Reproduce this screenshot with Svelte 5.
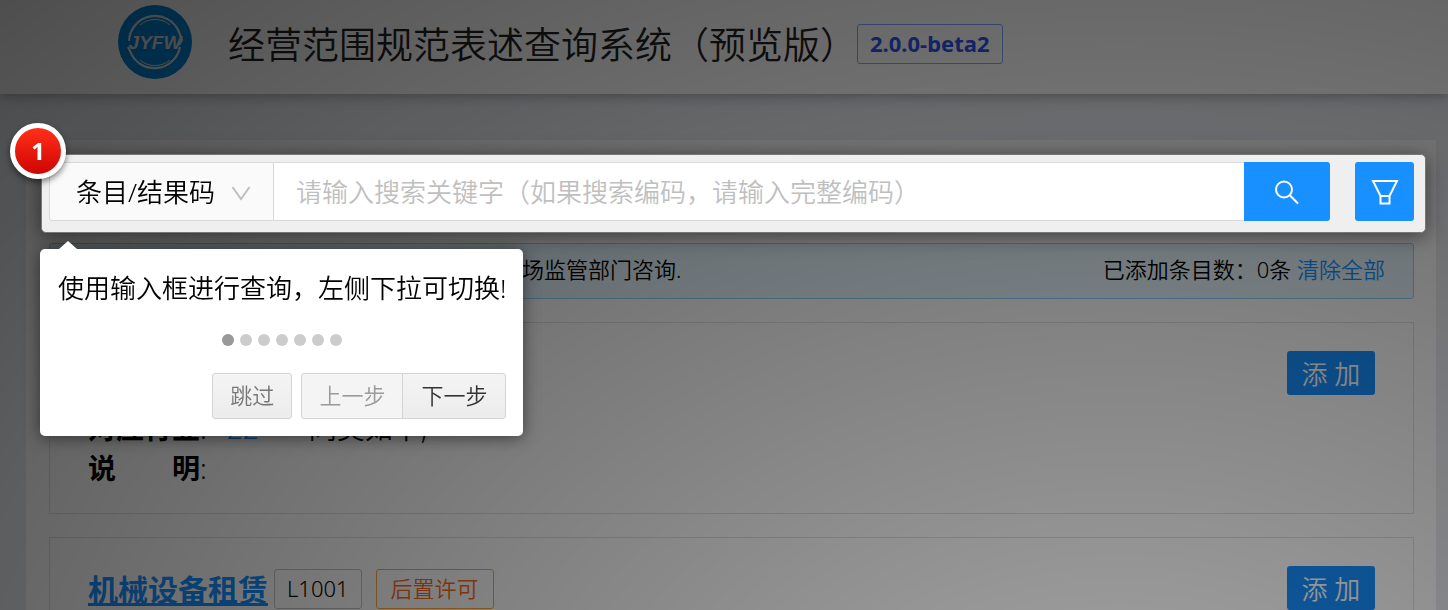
<script>
	let query = ''
	let field = 'code'
	let step = 0

	const stepCount = 7

	const items = [
		{
			name: '机械租赁',
			code: 'L1000',
			details: [
				{ label: '对应行业', link: '22', value: '同类如下,' },
				{ label: '说　　明', link: '', value: '' }
			]
		},
		{
			name: '机械设备租赁',
			code: 'L1001',
			permit: '后置许可',
			details: []
		}
	]
</script>

<header>
	<svg class="logo" viewBox="0 0 74 74" aria-hidden="true">
		<circle cx="37" cy="37" r="37" fill="#0084d6" />
		<g fill="none" stroke="#ddd">
			<path d="M11 36A26 26 0 0 1 61 27L64 35L61 40" stroke-width="2.2" />
			<path d="M62 42A26 26 0 0 1 12 46L10 42" stroke-width="2.2" />
			<path d="M22 20A23 23 0 0 1 52 20M22 55A23 23 0 0 0 52 55" stroke-width="1" />
		</g>
		<text x="37" y="44" text-anchor="middle">JYFW</text>
	</svg>
	<h1>经营范围规范表述查询系统（预览版）</h1>
	<span class="version">2.0.0-beta2</span>
</header>

<main>
	<form class="search" on:submit|preventDefault>
		<div class="field">
			<select bind:value={field} aria-label="查询方式">
				<option value="code">条目/结果码</option>
			</select>
			<svg viewBox="0 0 20 16" aria-hidden="true"><path d="M1.500 2L10 14L18.500 2" /></svg>
		</div>
		<input type="text" bind:value={query} aria-label="关键字" placeholder="请输入搜索关键字（如果搜索编码，请输入完整编码）" />
		<button class="go" aria-label="搜索">
			<svg viewBox="0 0 28 26" aria-hidden="true">
				<circle cx="11" cy="10.500" r="8" />
				<path d="M17 16.500L25 24.500" />
			</svg>
		</button>
		<button class="filter" type="button" aria-label="筛选">
			<svg viewBox="0 0 28 26" aria-hidden="true">
				<path d="M2 2H26L18.500 17H9.500ZM9.500 17V24.500H18.500V17" />
			</svg>
		</button>

		<span class="badge">1</span>
		<div class="tooltip" role="dialog" aria-label="使用引导">
			<p>使用输入框进行查询，左侧下拉可切换!</p>
			<div class="dots">
				{#each Array(stepCount) as _, i}
					<button type="button" class="dot" class:active={i == step} aria-label="第{i + 1}步" on:click={() => (step = i)}></button>
				{/each}
			</div>
			<div class="steps">
				<button type="button" class="skip">跳过</button>
				<button type="button" class="prev" disabled={step == 0} on:click={() => step--}>上一步</button>
				<button type="button" class="next" disabled={step == stepCount - 1} on:click={() => step++}>下一步</button>
			</div>
		</div>
	</form>

	<div class="notice">
		<span>如对经营范围规范表述有疑问，请向所在地市场监管部门咨询.</span>
		<span>已添加条目数：0条 <a href="#clear">清除全部</a></span>
	</div>

	{#each items as item}
		<article>
			<div class="info">
				<h2>
					<a href="#{item.code}">{item.name}</a>
					<span class="tag">{item.code}</span>
					{#if item.permit}
						<span class="tag permit">{item.permit}</span>
					{/if}
				</h2>
				{#each item.details as row}
					<p><b>{row.label}</b>:{#if row.link}<a href="#{row.link}">{row.link}</a>{/if}<span>{row.value}</span></p>
				{/each}
			</div>
			<button class="add">添 加</button>
		</article>
	{/each}
</main>

<div class="overlay"></div>

<style>
	:global(body) {
		margin: 0;
		overflow: hidden;
		background: #e9ecf1;
		color: #000;
		font-family: "Noto Sans", "Noto Sans CJK SC", sans-serif;
		font-weight: 350;
	}

	header {
		display: flex;
		align-items: center;
		height: 94px;
		box-sizing: border-box;
		padding: 0 118px 10px;
		background: #fff;
		box-shadow: 0 2px 12px rgba(0, 0, 0, 0.3);
		position: relative;
	}

	.logo {
		width: 74px;
		height: 74px;
		margin-right: 36px;
		flex: none;
	}

	.logo text {
		font: italic bold 19px "Liberation Sans", sans-serif;
		fill: #ddd;
	}

	h1 {
		margin: 0;
		padding-top: 6px;
		color: #222;
		font-size: 37px;
		font-weight: 350;
		line-height: 56px;
		white-space: nowrap;
	}

	.version {
		margin-top: 4px;
		padding: 0 12px 2px;
		border: 1px solid #85a5ff;
		border-radius: 3px;
		color: #2f54eb;
		font-size: 22px;
		font-weight: bold;
		line-height: 36px;
	}

	main {
		margin: 46px 12px 0 26px;
		padding: 22px 22px 22px 23px;
		background: #fff;
	}

	button, input, select {
		font-family: inherit;
		font-weight: inherit;
		margin: 0;
	}

	button {
		cursor: pointer;
	}

	a {
		color: #1890ff;
	}

	.search {
		display: flex;
		height: 59px;
		position: relative;
		z-index: 2;
	}

	.search::before {
		content: "";
		position: absolute;
		z-index: -1;
		inset: -8px -12px -12px -8px;
		border: 1px solid #777;
		box-sizing: border-box;
		border-radius: 5px;
		background: #efefef;
		box-shadow: 0 3px 20px rgba(0, 0, 0, 0.5);
	}

	.field {
		position: relative;
		width: 225px;
		box-sizing: border-box;
		flex: none;
		border: 1px solid #d9d9d9;
		border-radius: 3px 0 0 3px;
		background: #fafafa;
	}

	.field select {
		width: 100%;
		height: 100%;
		padding: 0 26px;
		border: 0;
		background: none;
		color: #000;
		appearance: none;
		font-size: 26px;
	}

	.field svg {
		position: absolute;
		right: 22px;
		top: 22px;
		width: 20px;
		height: 16px;
		fill: none;
		stroke: #bfbfbf;
		stroke-width: 2;
		pointer-events: none;
	}

	.search input {
		flex: 1;
		min-width: 0;
		box-sizing: border-box;
		padding: 0 22px;
		border: 1px solid #d9d9d9;
		border-width: 1px 0;
		background: #fff;
		font-size: 26px;
	}

	.search input::placeholder {
		color: #bfbfbf;
	}

	.go, .filter {
		display: flex;
		align-items: center;
		justify-content: center;
		flex: none;
		padding: 0;
		border: 0;
		background: #1890ff;
	}

	.go {
		width: 86px;
		border-radius: 0 3px 3px 0;
	}

	.filter {
		width: 59px;
		margin-left: 25px;
		border-radius: 3px;
	}

	.go svg, .filter svg {
		width: 28px;
		height: 26px;
		fill: none;
		stroke: #fff;
		stroke-width: 2;
	}

	.badge {
		position: absolute;
		left: -39px;
		top: -39px;
		width: 46px;
		height: 46px;
		border: 5px solid #fff;
		border-radius: 50%;
		background: linear-gradient(#ff3019, #cf0404);
		box-shadow: 0 3px 6px rgba(0, 0, 0, 0.5);
		color: #fff;
		font: bold 24px/46px "Noto Sans", sans-serif;
		text-align: center;
	}

	.tooltip {
		position: absolute;
		left: -9px;
		top: 87px;
		padding: 18px 17px 17px 18px;
		border-radius: 5px;
		background: #fff;
		box-shadow: 0 2px 16px rgba(0, 0, 0, 0.5);
	}

	.tooltip::before {
		content: "";
		position: absolute;
		left: 19px;
		top: -8px;
		border: 9px solid transparent;
		border-top: 0;
		border-bottom: 8px solid #fff;
	}

	.tooltip p {
		margin: 0;
		font-size: 26px;
		line-height: 42px;
		white-space: nowrap;
	}

	.dots {
		display: flex;
		justify-content: center;
		gap: 6px;
		margin: 25px 0 27px;
	}

	.dot {
		width: 12px;
		height: 12px;
		padding: 0;
		border: 0;
		border-radius: 50%;
		background: #ccc;
	}

	.dot.active {
		background: #999;
	}

	.steps {
		display: flex;
		justify-content: flex-end;
	}

	.steps button {
		height: 46px;
		padding: 0 17px 4px;
		border: 1px solid #d4d4d4;
		background: linear-gradient(#f4f4f4, #ececec);
		color: #333;
		font-size: 22px;
	}

	.steps .skip {
		margin-right: 9px;
		border-radius: 3px;
		color: #777;
	}

	.steps .prev {
		border-radius: 3px 0 0 3px;
	}

	.steps .prev:disabled {
		background: #f4f4f4;
		color: #9a9a9a;
	}

	.steps .next {
		margin-left: -1px;
		padding: 0 18px 4px;
		border-radius: 0 3px 3px 0;
	}

	.notice {
		display: flex;
		justify-content: space-between;
		margin-top: 22px;
		padding: 0 28px 3px 32px;
		border: 1px solid #91d5ff;
		border-radius: 3px;
		background: #e6f7ff;
		font-size: 22px;
		line-height: 51px;
	}

	.notice a {
		text-decoration: none;
	}

	article {
		display: flex;
		justify-content: space-between;
		align-items: flex-start;
		margin-top: 23px;
		padding: 28px 38px 25px;
		border: 1px solid #e0e0e0;
	}

	h2 {
		display: flex;
		align-items: center;
		height: 46px;
		margin: 0 0 11px;
		font-size: 30px;
	}

	h2 a {
		padding-bottom: 3px;
	}

	.tag {
		margin-left: 6px;
		padding: 0 12px 2px;
		border: 1px solid #c4c4c4;
		border-radius: 3px;
		font-size: 22px;
		font-weight: 350;
		line-height: 36px;
	}

	.tag.permit {
		margin-left: 14px;
		padding: 0 14px 2px;
		border-color: #ffa940;
		color: #fa6a1c;
	}

	article p {
		margin: 0;
		font-size: 28px;
		line-height: 40px;
	}

	article b {
		font-weight: bold;
	}

	article p a {
		margin: 0 50px 0 20px;
		text-decoration: none;
	}

	.add {
		width: 88px;
		height: 44px;
		padding: 0;
		border: 0;
		border-radius: 3px;
		background: #1890ff;
		color: #fff;
		font-size: 26px;
	}

	.overlay {
		position: fixed;
		inset: 0;
		z-index: 1;
		background: radial-gradient(ellipse 1700px 1250px at 1120px 820px, rgba(0, 0, 0, 0.42) 0, rgba(0, 0, 0, 0.9) 100%);
		opacity: 0.8;
	}
</style>
